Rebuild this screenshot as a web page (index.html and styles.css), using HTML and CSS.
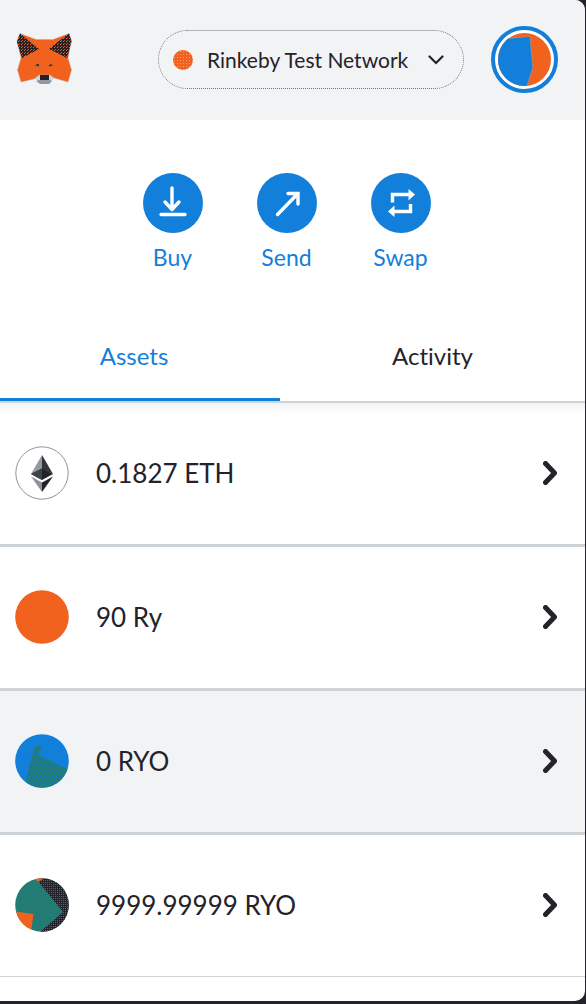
FILE: index.html
```html
<!DOCTYPE html>
<html lang="en">
<head>
<meta charset="utf-8">
<meta name="viewport" content="width=device-width, initial-scale=1">
<title>Wallet</title>
<link rel="stylesheet" href="styles.css">
</head>
<body>
<main class="wallet">
  <header class="topbar">
    <svg class="logo" viewBox="16 34 57 53" role="img" aria-label="MetaMask">
      <defs>
        <pattern id="ear" width="3" height="3" patternUnits="userSpaceOnUse">
          <rect width="3" height="3" fill="#24222a"/>
          <rect width="1" height="1" fill="#f1621f"/>
          <rect x="1" y="2" width="1" height="1" fill="#b9502a"/>
        </pattern>
      </defs>
      <path d="M34 79 40 84.500 50 84.500 54 79 49 76H39z" fill="#d0d5da"/>
      <path d="M36 82 39 81H50L52 82 49 85H40z" fill="#9299a3"/>
      <path d="M20 34.500 36 40.500H53L69 34.500 71.500 42 68 59 71.500 71 68 83 54 79 50 76H39L34 80 21 83 17.500 71 21 59 17 42z" fill="#f1621f" stroke="#b8a9a5" stroke-width=".4"/>
      <path d="M20 34.500 29 42 39 50 22 59 17 43zM69 34.500 59 42 49 50 67 59 71.500 42z" fill="url(#ear)"/>
      <path d="M40 76h9v5h-9z" fill="#24222a"/>
      <path d="M35 66.500l2-1.500h2v2.500zM53 66.500l-2-1.500-2 1v1.500z" fill="#24423f"/>
    </svg>
    <label class="network">
      <span class="network-dot"></span>
      <select class="network-select" aria-label="Network">
        <option>Rinkeby Test Network</option>
      </select>
      <svg class="network-chevron" viewBox="0 0 16 10" aria-hidden="true"><path d="M1.500 1.500 8 8l6.500-6.500" fill="none" stroke="#24222a" stroke-width="2.200" stroke-linecap="round"/></svg>
    </label>
    <button class="account" aria-label="Account">
      <svg class="account-icon" viewBox="498 33 54 54" aria-hidden="true">
        <clipPath id="face"><circle cx="525" cy="60" r="27"/></clipPath>
        <g clip-path="url(#face)">
          <path d="M498 33h54v54h-54z" fill="#f1621f"/>
          <path d="M490 39.500 509 38.500 530.500 36.500 533.500 68 527 89H490z" fill="#1280da" stroke="#a89a96" stroke-width=".6"/>
        </g>
      </svg>
    </button>
  </header>

  <section class="actions">
    <button class="action">
      <svg class="action-icon" viewBox="0 0 60 60" aria-hidden="true"><g fill="none" stroke="#fff" stroke-width="3.400" stroke-linecap="round" stroke-linejoin="round"><path d="M29 15V36M22 29l7 7.500L36 29M18 41.500h24"/></g></svg>
      Buy
    </button>
    <button class="action">
      <svg class="action-icon" viewBox="0 0 60 60" aria-hidden="true"><path d="M20.500 41.500 41 20.500M31 20.500H41V31" fill="none" stroke="#fff" stroke-width="3.400" stroke-linecap="round" stroke-linejoin="miter"/></svg>
      Send
    </button>
    <button class="action">
      <svg class="action-icon" viewBox="0 0 60 60" aria-hidden="true"><path d="M21.500 29.500V21.500H39M39.500 31V38.500H22" fill="none" stroke="#fff" stroke-width="3.400"/><path d="M37.500 16 44 21.500l-6.500 6zM23.500 32.500l-6.500 6 6.500 5.500z" fill="#fff"/></svg>
      Swap
    </button>
  </section>

  <nav class="tabs" role="tablist">
    <button class="tab tab-assets tab-active" role="tab" aria-selected="true">Assets</button>
    <button class="tab" role="tab" aria-selected="false">Activity</button>
  </nav>

  <section class="assets">
    <button class="asset">
      <svg class="token" viewBox="0 0 54 54" aria-hidden="true">
        <circle cx="27" cy="27" r="26.200" fill="#fff" stroke="#8d949f"/>
        <path d="M27 9v15L16 28z" fill="#9299a3"/>
        <path d="M27 9 38 28 27 23z" fill="#34343b"/>
        <path d="M27 22.500 38 28 27 34 16 28z" fill="#24222a"/>
        <path d="M27 22.500V34L16 28z" fill="#3a4449"/>
        <path d="M16 30.500 27 36.500V46z" fill="#8b929b"/>
        <path d="M38 30.500 27 36.500V46z" fill="#24222a"/>
      </svg>
      <span class="amount">0.1827 ETH</span>
      <svg class="arrow" viewBox="0 0 14 24" aria-hidden="true"><path d="M2.500 2.500 11.500 12 2.500 21.500"/></svg>
    </button>
    <button class="asset">
      <svg class="token" viewBox="0 0 54 54" aria-hidden="true"><circle cx="27" cy="27" r="26.800" fill="#f1621f"/></svg>
      <span class="amount">90 Ry</span>
      <svg class="arrow" viewBox="0 0 14 24" aria-hidden="true"><path d="M2.500 2.500 11.500 12 2.500 21.500"/></svg>
    </button>
    <button class="asset asset-hover">
      <svg class="token" viewBox="0 0 54 54" aria-hidden="true">
        <defs>
          <clipPath id="disc"><circle cx="27" cy="27" r="26.800"/></clipPath>
          <pattern id="weave" width="4" height="3" patternUnits="userSpaceOnUse">
            <rect width="4" height="3" fill="#237c73"/>
            <rect x="1" width="1" height="1" fill="#187fb4"/>
            <rect x="3" y="2" width="1" height="1" fill="#187fb4"/>
          </pattern>
          <pattern id="shade" width="2" height="2" patternUnits="userSpaceOnUse">
            <rect width="2" height="2" fill="#24222a"/>
            <rect width="1" height="1" fill="#237c73"/>
          </pattern>
        </defs>
        <g clip-path="url(#disc)">
          <path d="M0 0h54v54H0z" fill="#1280da"/>
          <path d="M19.500 12H27L23 21 53 35V54H16L10.500 47z" fill="url(#weave)"/>
        </g>
      </svg>
      <span class="amount">0 RYO</span>
      <svg class="arrow" viewBox="0 0 14 24" aria-hidden="true"><path d="M2.500 2.500 11.500 12 2.500 21.500"/></svg>
    </button>
    <button class="asset">
      <svg class="token" viewBox="0 0 54 54" aria-hidden="true">
        <g clip-path="url(#disc)">
          <path d="M0 0h54v54H0z" fill="#237c73"/>
          <path d="M22 2 48 34 25 54H54V0H24z" fill="url(#shade)"/>
          <path d="M19 0H30L23 4zM0 33.500 18.500 36 16 54H0z" fill="#f1621f"/>
        </g>
      </svg>
      <span class="amount">9999.99999 RYO</span>
      <svg class="arrow" viewBox="0 0 14 24" aria-hidden="true"><path d="M2.500 2.500 11.500 12 2.500 21.500"/></svg>
    </button>
  </section>
</main>
</body>
</html>
```

FILE: styles.css
```css
* { box-sizing: border-box; }

body {
  margin: 0;
  padding: 0 1px 3px 0;
  min-height: 100vh;
  display: flex;
  background: #24222a;
  color: #24222a;
  font-family: Lato, "Open Sans", sans-serif;
  font-variant-ligatures: none;
}

button, select {
  margin: 0;
  padding: 0;
  border: 0;
  background: none;
  color: inherit;
  font: inherit;
  font-variant-ligatures: none;
  cursor: pointer;
}

.wallet {
  flex: 1;
  min-width: 0;
  overflow: hidden;
  background: #fff;
  border-radius: 0 10px 10px 0;
}

.topbar {
  display: flex;
  align-items: center;
  height: 120px;
  padding: 0 27px 1px 16px;
  background: #f2f3f5;
}

.logo {
  width: 57px;
  height: 53px;
  margin-right: auto;
}

.network {
  display: flex;
  align-items: center;
  height: 59px;
  margin-right: 27px;
  padding: 0 19px 0 14px;
  border: 1px dotted #6f7783;
  border-radius: 30px;
}

.network-dot {
  width: 20px;
  height: 20px;
  margin-right: 14px;
  border-radius: 50%;
  background: radial-gradient(circle, #f5a078 0 1px, transparent 1px) 0 0 / 3px 3px #f1621f;
}

.network-select {
  appearance: none;
  font-size: 21px;
  line-height: 28px;
}

.network-chevron {
  width: 16px;
  height: 10px;
  margin-left: 18px;
}

.account {
  width: 67px;
  height: 67px;
  padding: 3px;
  border: 4px solid #1280da;
  border-radius: 50%;
  background: #fff;
}

.account-icon {
  display: block;
  width: 100%;
}

.actions {
  display: flex;
  justify-content: center;
  gap: 54px;
  padding: 53px 12px 0 0;
}

.action {
  display: flex;
  flex-direction: column;
  align-items: center;
  gap: 10px;
  width: 60px;
  color: #1280da;
  font-size: 23px;
  line-height: 28px;
}

.action-icon {
  width: 60px;
  height: 60px;
  border-radius: 50%;
  background: #1280da;
}

.tabs {
  display: grid;
  grid-template-columns: 280fr 305fr;
  margin-top: 41px;
  border-bottom: 2px solid #ced3d8;
}

.tab {
  padding: 30px 0 28px;
  font-size: 24px;
  line-height: 28px;
  border-bottom: 3px solid transparent;
}

.tab-assets {
  padding-right: 12px;
}

.tab-active {
  color: #1280da;
  border-bottom-color: #1280da;
}

.assets {
  background: linear-gradient(#f2f3f5, #fff 10px);
}

.asset {
  display: flex;
  align-items: center;
  width: 100%;
  padding: 43px 28px 44px 15px;
  border-bottom: 3px solid #ced3d8;
  text-align: left;
}

.asset:last-child {
  border-bottom-width: 1px;
}

.asset-hover {
  background: #f2f3f5;
}

.token {
  flex: none;
  width: 54px;
  height: 54px;
}

.amount {
  flex: 1;
  margin-left: 27px;
  font-size: 26px;
  line-height: 32px;
}

.arrow {
  width: 14px;
  height: 24px;
  fill: none;
  stroke: #24222a;
  stroke-width: 5;
  stroke-linecap: round;
  stroke-linejoin: round;
}
```
